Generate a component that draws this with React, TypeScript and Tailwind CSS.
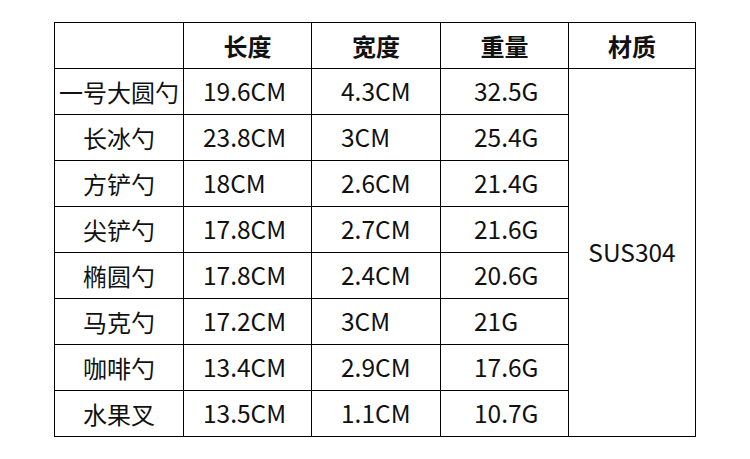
import React from 'react';

const rows = [
  { name: '一号大圆勺', length: '19.6CM', width: '4.3CM', weight: '32.5G' },
  { name: '长冰勺', length: '23.8CM', width: '3CM', weight: '25.4G' },
  { name: '方铲勺', length: '18CM', width: '2.6CM', weight: '21.4G' },
  { name: '尖铲勺', length: '17.8CM', width: '2.7CM', weight: '21.6G' },
  { name: '椭圆勺', length: '17.8CM', width: '2.4CM', weight: '20.6G' },
  { name: '马克勺', length: '17.2CM', width: '3CM', weight: '21G' },
  { name: '咖啡勺', length: '13.4CM', width: '2.9CM', weight: '17.6G' },
  { name: '水果叉', length: '13.5CM', width: '1.1CM', weight: '10.7G' },
];

const cell = 'border border-black p-0 align-middle';
const num = `${cell} text-[24.5px]`;

export default function App() {
  return (
    <div
      className="w-[750px] h-[459px] bg-white pt-[22px] pl-[54px] text-[#111] text-[24px]"
      style={{ fontFamily: '"Noto Sans CJK SC", "Noto Sans", sans-serif' }}
    >
      <table className="border-collapse table-fixed w-[641px]">
        <colgroup>
          <col className="w-[129px]" />
          <col className="w-[128px]" />
          <col className="w-[129px]" />
          <col className="w-[128px]" />
          <col className="w-[127px]" />
        </colgroup>
        <thead>
          <tr className="h-[46px]">
            <th className={cell}></th>
            <th className={`${cell} font-bold text-center`}>长度</th>
            <th className={`${cell} font-bold text-center`}>宽度</th>
            <th className={`${cell} font-bold text-center`}>重量</th>
            <th className={`${cell} font-bold text-center`}>材质</th>
          </tr>
        </thead>
        <tbody>
          {rows.map((r, i) => (
            <tr key={r.name} className="h-[46px]">
              <td className={`${cell} text-center whitespace-nowrap`}>{r.name}</td>
              <td className={`${num} pl-[19px]`}>{r.length}</td>
              <td className={`${num} pl-[29px]`}>{r.width}</td>
              <td className={`${num} pl-[33px]`}>{r.weight}</td>
              {i === 0 && (
                <td rowSpan={8} className={`${num} text-center`}>
                  SUS304
                </td>
              )}
            </tr>
          ))}
        </tbody>
      </table>
    </div>
  );
}
